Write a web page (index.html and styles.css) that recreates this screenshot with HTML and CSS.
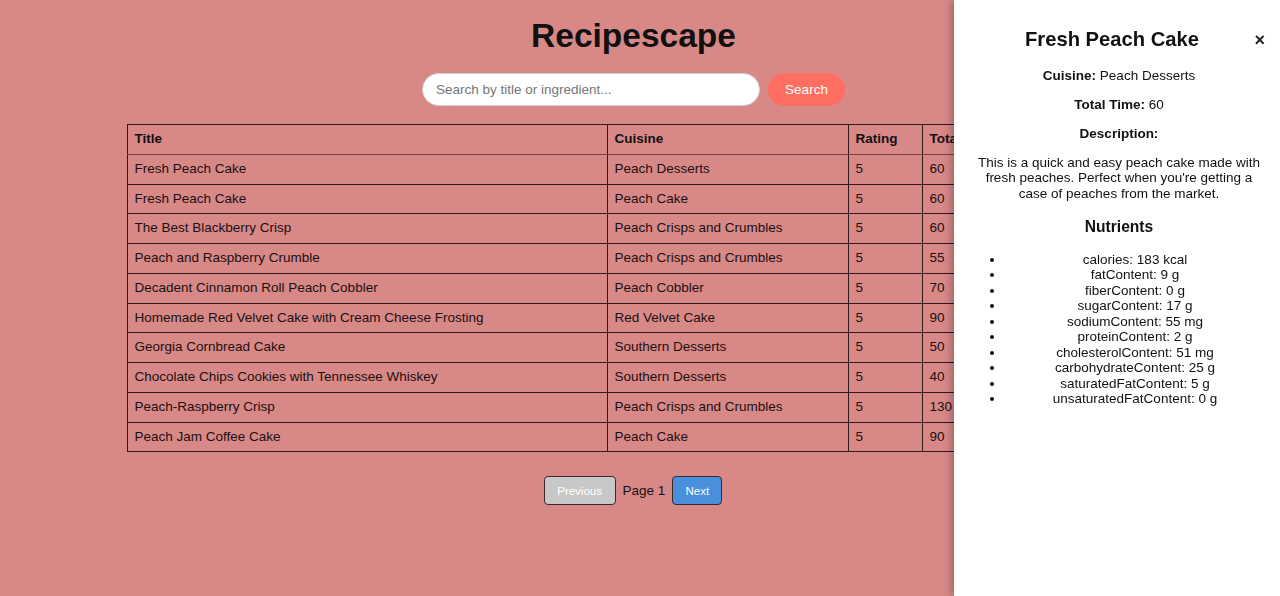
FILE: index.html
```html
<!DOCTYPE html>
<html lang="en">
<head>
<meta charset="utf-8">
<title>Recipescape</title>
<link rel="stylesheet" href="styles.css">
</head>
<body>
<main class="page">
  <header class="top">
    <h1 class="brand">Recipescape</h1>
    <form class="search">
      <input class="search-input" type="text" placeholder="Search by title or ingredient...">
      <button class="search-btn" type="button">Search</button>
    </form>
  </header>

  <table class="recipes">
    <colgroup>
      <col class="c-title"><col class="c-cuisine"><col class="c-rating"><col class="c-time">
    </colgroup>
    <thead>
      <tr><th>Title</th><th>Cuisine</th><th>Rating</th><th>Total Time</th></tr>
    </thead>
    <tbody>
      <tr><td>Fresh Peach Cake</td><td>Peach Desserts</td><td>5</td><td>60</td></tr>
      <tr><td>Fresh Peach Cake</td><td>Peach Cake</td><td>5</td><td>60</td></tr>
      <tr><td>The Best Blackberry Crisp</td><td>Peach Crisps and Crumbles</td><td>5</td><td>60</td></tr>
      <tr><td>Peach and Raspberry Crumble</td><td>Peach Crisps and Crumbles</td><td>5</td><td>55</td></tr>
      <tr><td>Decadent Cinnamon Roll Peach Cobbler</td><td>Peach Cobbler</td><td>5</td><td>70</td></tr>
      <tr><td>Homemade Red Velvet Cake with Cream Cheese Frosting</td><td>Red Velvet Cake</td><td>5</td><td>90</td></tr>
      <tr><td>Georgia Cornbread Cake</td><td>Southern Desserts</td><td>5</td><td>50</td></tr>
      <tr><td>Chocolate Chips Cookies with Tennessee Whiskey</td><td>Southern Desserts</td><td>5</td><td>40</td></tr>
      <tr><td>Peach-Raspberry Crisp</td><td>Peach Crisps and Crumbles</td><td>5</td><td>130</td></tr>
      <tr><td>Peach Jam Coffee Cake</td><td>Peach Cake</td><td>5</td><td>90</td></tr>
    </tbody>
  </table>

  <nav class="pager">
    <button class="pg-btn pg-prev" type="button">Previous</button>
    <span class="pg-label">Page 1</span>
    <button class="pg-btn pg-next" type="button">Next</button>
  </nav>
</main>

<aside class="panel">
  <div class="panel-head">
    <h2 class="panel-title">Fresh Peach Cake</h2>
    <button class="close" type="button">&times;</button>
  </div>
  <p><strong>Cuisine:</strong> Peach Desserts</p>
  <p><strong>Total Time:</strong> 60</p>
  <p><strong>Description:</strong></p>
  <p>This is a quick and easy peach cake made with fresh peaches. Perfect when you're getting a case of peaches from the market.</p>
  <h3 class="nut-title">Nutrients</h3>
  <ul class="nut-list">
    <li>calories: 183 kcal</li>
    <li>fatContent: 9 g</li>
    <li>fiberContent: 0 g</li>
    <li>sugarContent: 17 g</li>
    <li>sodiumContent: 55 mg</li>
    <li>proteinContent: 2 g</li>
    <li>cholesterolContent: 51 mg</li>
    <li>carbohydrateContent: 25 g</li>
    <li>saturatedFatContent: 5 g</li>
    <li>unsaturatedFatContent: 0 g</li>
  </ul>
</aside>
</body>
</html>
```

FILE: styles.css
```css
* { box-sizing: border-box; }

html, body {
  margin: 0;
  height: 100%;
}

body {
  background: #d98888;
  font-family: "Liberation Sans", Arial, sans-serif;
  font-size: 13.5px;
  color: #111;
  overflow: hidden;
}

.page {
  padding-top: 15px;
}

.top {
  display: flex;
  flex-direction: column;
  align-items: center;
  padding-right: 13px;
}

.brand {
  margin: 0;
  font-size: 33.5px;
  line-height: 42px;
  font-weight: bold;
  color: #111;
}

.search {
  display: flex;
  gap: 8px;
  margin-top: 16px;
}

.search-input {
  width: 338px;
  height: 33px;
  border: 1px solid #cfcfcf;
  border-radius: 17px;
  padding: 0 13px;
  font-family: inherit;
  font-size: 13.5px;
  background: #fff;
  outline: none;
}
.search-input::placeholder { color: #757575; }

.search-btn {
  width: 77px;
  height: 33px;
  border: none;
  border-radius: 17px;
  background: #ff6f61;
  color: #fff;
  font-family: inherit;
  font-size: 13.5px;
  padding: 0;
}

.recipes {
  width: 1026px;
  margin: 18px auto 0;
  border-collapse: collapse;
  table-layout: fixed;
  border: 1px solid #2e1a1a;
}

.c-title { width: 480px; }
.c-cuisine { width: 241px; }
.c-rating { width: 74px; }
.c-time { width: 231px; }

.recipes th,
.recipes td {
  border: 1px solid #2e1a1a;
  padding: 6px 7px;
  line-height: 16.75px;
  text-align: left;
  white-space: nowrap;
  overflow: hidden;
}

.recipes th {
  font-weight: bold;
  color: #111;
  border-bottom-color: #7a3f3f;
}

.recipes td { color: #1a1010; }

.pager {
  display: flex;
  justify-content: center;
  align-items: center;
  gap: 7px;
  margin-top: 24px;
  padding-right: 14px;
}

.pg-btn {
  height: 29px;
  border: 1px solid #3a2a2a;
  border-radius: 4px;
  color: #fff;
  font-family: inherit;
  font-size: 11.5px;
  padding: 0;
}
.pg-prev { width: 72px; background: #c8c8c8; }
.pg-next { width: 50px; background: #4a8fdb; }

.pg-label {
  font-size: 13.5px;
  color: #111;
}

.panel {
  position: fixed;
  top: 0;
  right: 0;
  width: 326px;
  height: 100%;
  background: #fff;
  box-shadow: -3px 0 8px rgba(0, 0, 0, 0.25);
  padding: 28px 15px 20px 19px;
  text-align: center;
  color: #111;
}

.panel-head {
  display: flex;
  align-items: center;
  margin-bottom: 16.5px;
}

.panel-title {
  flex: 1;
  margin: 0;
  font-size: 20.2px;
  line-height: 23px;
  font-weight: bold;
}

.close {
  border: none;
  background: none;
  padding: 0;
  width: 14px;
  text-align: right;
  font-size: 18px;
  line-height: 18px;
  font-weight: bold;
  color: #222;
  font-family: inherit;
}

.panel p {
  margin: 13.5px 0;
  line-height: 15.5px;
}

.nut-title {
  margin: 16px 0 15.6px;
  font-size: 15.6px;
  line-height: 19px;
  font-weight: bold;
}

.nut-list {
  margin: 0 0 0 -3px;
  padding-left: 35px;
  line-height: 15.5px;
}
```
